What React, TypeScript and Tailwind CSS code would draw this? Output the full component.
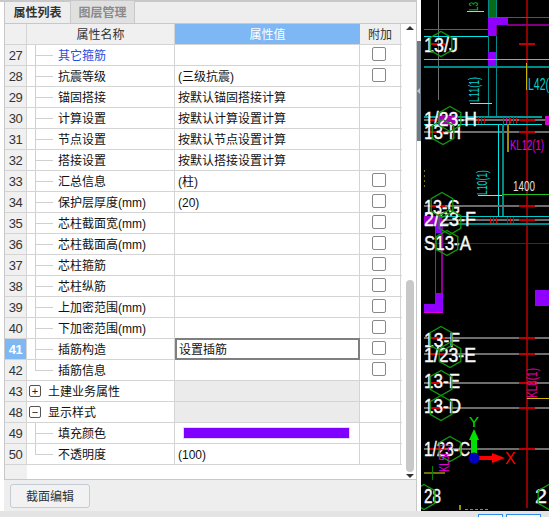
const FONT = 'font-["Liberation_Sans","Noto_Sans_CJK_SC",sans-serif]';

type Row = {
  no: number;
  name: string;
  value?: string;
  check?: boolean;
  link?: boolean;
  group?: '+' | '-';
  last?: boolean;
  active?: boolean;
  color?: boolean;
};

const rows: Row[] = [
  { no: 27, name: '其它箍筋', check: true, link: true },
  { no: 28, name: '抗震等级', value: '(三级抗震)', check: true },
  { no: 29, name: '锚固搭接', value: '按默认锚固搭接计算' },
  { no: 30, name: '计算设置', value: '按默认计算设置计算' },
  { no: 31, name: '节点设置', value: '按默认节点设置计算' },
  { no: 32, name: '搭接设置', value: '按默认搭接设置计算' },
  { no: 33, name: '汇总信息', value: '(柱)', check: true },
  { no: 34, name: '保护层厚度(mm)', value: '(20)', check: true },
  { no: 35, name: '芯柱截面宽(mm)', check: true },
  { no: 36, name: '芯柱截面高(mm)', check: true },
  { no: 37, name: '芯柱箍筋', check: true },
  { no: 38, name: '芯柱纵筋', check: true },
  { no: 39, name: '上加密范围(mm)', check: true },
  { no: 40, name: '下加密范围(mm)', check: true },
  { no: 41, name: '插筋构造', value: '设置插筋', check: true, active: true },
  { no: 42, name: '插筋信息', check: true, last: true },
  { no: 43, name: '土建业务属性', group: '+' },
  { no: 48, name: '显示样式', group: '-' },
  { no: 49, name: '填充颜色', color: true },
  { no: 50, name: '不透明度', value: '(100)', last: true },
];

function PropRow({ row }: { row: Row }) {
  return (
    <div className="flex h-[21px] border-b border-[#d4d4d4]">
      <div
        className={`flex w-[22px] shrink-0 items-center justify-center border-r border-[#d4d4d4] pt-[2px] text-[13px] tracking-[-0.5px] ${
          row.active ? 'bg-[#7db8f5] font-bold text-white' : 'bg-[#f0f0f0] text-[#333]'
        }`}
      >
        {row.no}
      </div>
      <div className="relative flex w-[148px] shrink-0 items-center border-r border-[#d4d4d4]">
        {row.group ? (
          <>
            <span className="ml-[2px] flex h-[12px] w-[12px] items-center justify-center rounded-[2px] border border-[#555] text-[11px] leading-none text-[#222]">
              {row.group === '+' ? '+' : '−'}
            </span>
            <span className="ml-[7px] pt-[2px] text-[#111]">{row.name}</span>
          </>
        ) : (
          <>
            <span className={`ml-[8px] w-px shrink-0 self-start bg-[#d0d0d0] ${row.last ? 'h-[11px]' : 'h-full'}`} />
            <span className="absolute top-[10px] left-[9px] h-px w-[17px] bg-[#d0d0d0]" />
            <span className={`ml-[22px] pt-[2px] ${row.link ? 'text-[#1f4fe0]' : 'text-[#111]'}`}>{row.name}</span>
          </>
        )}
      </div>
      <div
        className={`flex w-[185px] shrink-0 items-center ${row.group ? 'bg-[#ebebeb]' : ''} ${
          row.active ? 'relative -my-px border-2 border-[#7f7f7f] pl-[2px]' : 'border-r border-[#d4d4d4] pl-[3px]'
        }`}
      >
        {row.color ? (
          <div className="ml-[5px] h-[12px] w-[167px] border border-[#e0d8f0] bg-[#8000ff]" />
        ) : (
          <span className="pt-[2px] text-[#111]">{row.value}</span>
        )}
      </div>
      <div className="flex w-[41px] shrink-0 items-center justify-center border-r border-[#d4d4d4]">
        {row.check && <span className="mr-[2px] mb-[2px] h-[14px] w-[14px] rounded-[2px] border border-[#888] bg-white" />}
      </div>
    </div>
  );
}

function Hex({ cx, cy }: { cx: number; cy: number }) {
  const r = 12.5;
  const pts = [0, 60, 120, 180, 240, 300]
    .map((a) => {
      const t = (a * Math.PI) / 180;
      return `${cx + r * Math.sin(t)},${cy - r * Math.cos(t)}`;
    })
    .join(' ');
  return <polygon points={pts} fill="none" stroke="#109a10" strokeWidth="1.3" shapeRendering="auto" />;
}

function Label({ x, y, w, t }: { x: number; y: number; w: number; t: string }) {
  return (
    <text
      x={x}
      y={y}
      fill="#f8f8f8"
      stroke="#f8f8f8"
      strokeWidth="0.4"
      fontSize="21"
      textLength={w}
      lengthAdjust="spacingAndGlyphs"
      fontFamily="Liberation Sans, sans-serif"
      shapeRendering="auto"
    >
      {t}
    </text>
  );
}

function Tick({ y }: { y: number }) {
  return (
    <>
      <line x1="424" x2="549" y1={y} y2={y} stroke="#6e6e6e" strokeWidth="1.5" />
      <line x1="430" x2="445" y1={y} y2={y} stroke="#d00000" strokeWidth="1.5" />
      <line x1="519" x2="535" y1={y} y2={y} stroke="#c00000" strokeWidth="1.5" />
    </>
  );
}

function Hatch({ x, y, color }: { x: number; y: number; color: string }) {
  return (
    <>
      {[0, 3, 6].map((d) => (
        <line key={d} x1={x + d} x2={x + d} y1={y - 3} y2={y + 4} stroke={color} />
      ))}
    </>
  );
}

function CadText({ transform, x, y, fill, size, w, t }: { transform?: string; x?: number; y?: number; fill: string; size: number; w: number; t: string }) {
  return (
    <text
      transform={transform}
      x={x}
      y={y}
      fill={fill}
      fontSize={size}
      textLength={w}
      lengthAdjust="spacingAndGlyphs"
      fontFamily="Liberation Sans, sans-serif"
    >
      {t}
    </text>
  );
}

function CadDrawing() {
  return (
    <svg viewBox="421 0 128 511" className="block h-[511px] w-[128px]" shapeRendering="crispEdges">
      <rect x="421" y="0" width="128" height="511" fill="#000" />
      {/* axis lines */}
      <line x1="438" x2="438" y1="0" y2="100" stroke="#6e6e6e" />
      <line x1="424" x2="424" y1="170" y2="190" stroke="#707000" strokeDasharray="2 3" />
      <line x1="527" x2="527" y1="0" y2="508" stroke="#8b0000" strokeWidth="1.5" />
      <line x1="488" x2="488" y1="0" y2="117" stroke="#008b8b" />
      <line x1="496" x2="496" y1="0" y2="117" stroke="#008b8b" />
      <rect x="489" y="0" width="7" height="17" fill="#0a6a1a" />
      <line x1="488" x2="549" y1="17.5" y2="17.5" stroke="#d000d0" />
      <line x1="507" x2="549" y1="25" y2="25" stroke="#800080" strokeWidth="2" />
      <line x1="496" x2="496" y1="25" y2="36" stroke="#800080" />
      <rect x="488" y="18" width="20" height="7" fill="#8f00ff" />
      <rect x="488" y="18" width="8" height="18" fill="#8f00ff" />
      <rect x="488" y="52" width="8" height="15" fill="#8f00ff" />
      <line x1="424" x2="488" y1="29" y2="29" stroke="#008b8b" />
      <line x1="424" x2="488" y1="36.5" y2="36.5" stroke="#00e5e5" />
      <line x1="424" x2="549" y1="59.5" y2="59.5" stroke="#00e5e5" />
      <line x1="424" x2="549" y1="67" y2="67" stroke="#008b8b" strokeWidth="1.5" />
      <line x1="430" x2="445" y1="44" y2="44" stroke="#d00000" strokeWidth="1.5" />
      <line x1="519" x2="535" y1="44" y2="44" stroke="#c00000" strokeWidth="1.5" />
      <line x1="526" x2="526" y1="63" y2="90" stroke="#c8b400" />
      <line x1="470" x2="492" y1="103.5" y2="103.5" stroke="#e0e000" />
      <line x1="467" x2="484" y1="11.5" y2="11.5" stroke="#e0e000" />
      <line x1="424" x2="542" y1="117" y2="117" stroke="#009a9a" strokeWidth="1.5" />
      <line x1="424" x2="542" y1="124" y2="124" stroke="#00e5e5" />
      <Tick y={120} />
      <Tick y={132} />
      <Hatch x={478} y={120} color="#c00000" />
      <Hatch x={503} y={120} color="#d000a0" />
      <Hatch x={510} y={120} color="#c00000" />
      <rect x="545" y="116" width="4" height="9" fill="#d000d0" />
      <rect x="438" y="115" width="20" height="10" fill="#a000b0" />
      <line x1="498" x2="498" y1="124" y2="216" stroke="#00e5e5" />
      <line x1="503" x2="503" y1="124" y2="216" stroke="#008b8b" strokeWidth="1.5" />
      <line x1="508" x2="508" y1="124" y2="152" stroke="#a08a00" strokeWidth="2" />
      <line x1="478" x2="502" y1="195.5" y2="195.5" stroke="#e0e000" />
      <line x1="502" x2="549" y1="194" y2="194" stroke="#20c020" />
      <Tick y={206} />
      <Tick y={220} />
      <Hatch x={490} y={220} color="#c00000" />
      <Hatch x={507} y={220} color="#c00000" />
      <line x1="424" x2="549" y1="216" y2="216" stroke="#00c8c8" />
      <line x1="424" x2="549" y1="224" y2="224" stroke="#008b8b" strokeWidth="1.5" />
      <line x1="424" x2="549" y1="243" y2="243" stroke="#a00000" />
      <rect x="424" y="216" width="18" height="9" fill="#a000d0" />
      <rect x="435" y="225" width="8" height="8" fill="#8f00ff" />
      <line x1="435" x2="435" y1="225" y2="295" stroke="#c000d0" />
      <line x1="442" x2="442" y1="225" y2="312" stroke="#900090" strokeWidth="2" />
      <rect x="435" y="293" width="8" height="12" fill="#8f00ff" />
      <rect x="424" y="304" width="19" height="8" fill="#8f00ff" />
      <line x1="424" x2="443" y1="312" y2="312" stroke="#e000e0" />
      <rect x="535" y="290" width="14" height="16" fill="#8f00ff" />
      <Tick y={338} />
      <Tick y={354} />
      <Tick y={383} />
      <Tick y={408} />
      <Tick y={449} />
      <line x1="527" x2="549" y1="398" y2="398" stroke="#c8b400" />
      <line x1="424" x2="445" y1="473" y2="473" stroke="#707000" strokeWidth="2" />
      <line x1="432" x2="432" y1="466" y2="480" stroke="#0a7a0a" />
      <line x1="460" x2="460" y1="505" y2="510" stroke="#a08a00" strokeWidth="2" />
      <line x1="465" x2="488" y1="509" y2="509" stroke="#00c8c8" strokeDasharray="3 2" />
      <Label x={424} y={52} w={34} t="13/J" />
      <Label x={424} y={126} w={53} t="1/23-H" />
      <Label x={424} y={139} w={37} t="13-H" />
      <Label x={424} y={214} w={36} t="13-G" />
      <Label x={424} y={226} w={52} t="2/23-F" />
      <Label x={424} y={250} w={47} t="S13-A" />
      <Label x={424} y={347} w={36} t="13-F" />
      <Label x={424} y={362} w={52} t="1/23-E" />
      <Label x={424} y={388} w={36} t="13-E" />
      <Label x={424} y={413} w={37} t="13-D" />
      <Label x={424} y={456} w={46} t="1/23-C" />
      <Label x={424} y={503} w={17} t="28" />
      <Label x={535} y={503} w={12} t="2" />
      <Hex cx={441} cy={44} />
      <Hex cx={450} cy={119} />
      <Hex cx={443} cy={132} />
      <Hex cx={442} cy={205} />
      <Hex cx={450} cy={222} />
      <Hex cx={447} cy={243} />
      <Hex cx={441} cy={339} />
      <Hex cx={450} cy={355} />
      <Hex cx={441} cy={383} />
      <Hex cx={441} cy={408} />
      <Hex cx={450} cy={449} />
      <Hex cx={424} cy={497} />
      <Hex cx={549} cy={497} />
      <CadText x={513} y={191} fill="#e0e0e0" size={14} w={22} t="1400" />
      <CadText x={528} y={90} fill="#00d0d0" size={16} w={21} t="L42(" />
      <CadText x={510} y={150} fill="#e000e0" size={15} w={34} t="KL12(1)" />
      <CadText transform="translate(479 102) rotate(-90)" fill="#00d0d0" size={14} w={25} t="L11(1)" />
      <CadText transform="translate(487 195) rotate(-90)" fill="#00d0d0" size={14} w={25} t="L10(1)" />
      <CadText transform="translate(537 398) rotate(-90)" fill="#e000a0" size={14} w={30} t="KL8(1)" />
      <CadText transform="translate(449 472) rotate(-90)" fill="#e000e0" size={14} w={28} t="KL5(1)" />
      <CadText transform="translate(478 11) rotate(-90)" fill="#00c020" size={13} w={9} t="L3" />
      {/* axis gizmo */}
      <g shapeRendering="auto">
        <rect x="471" y="438" width="6" height="20" fill="#00e000" />
        <polygon points="474,429 479,440 469,440" fill="#00e000" />
        <rect x="479" y="456" width="15" height="4" fill="#ff0000" />
        <polygon points="505,458 492,453 492,463" fill="#ff0000" />
        <circle cx="474" cy="458" r="5.5" fill="#0000c0" />
        <text x="469" y="427" fill="#00e000" fontSize="15" fontFamily="Liberation Sans, sans-serif">
          Y
        </text>
        <text x="505" y="464" fill="#ff0000" fontSize="16" fontFamily="Liberation Sans, sans-serif">
          X
        </text>
      </g>
    </svg>
  );
}

export default function App() {
  return (
    <div className={`${FONT} flex h-[517px] w-[549px] flex-col overflow-hidden bg-white text-[12px]`}>
      <div className="flex h-[511px]">
        <div className="flex w-[417px] shrink-0 flex-col border-t-2 border-r border-[#c8c8c8] pl-[4px]">
          {/* tabs */}
          <div className="flex h-[22px] shrink-0 items-end border-b border-l border-[#c8c8c8] bg-[#eeeeee]">
            <div className="flex h-[22px] w-[65px] items-center justify-center pt-[2px] font-bold text-[#333]">属性列表</div>
            <div className="flex h-[22px] w-[65px] items-center justify-center border-x border-[#c8c8c8] bg-[#e0e0e0] pt-[2px] font-bold text-[#8a8a8a]">
              图层管理
            </div>
          </div>
          {/* grid */}
          <div className="flex h-[456px] shrink-0 border-b border-l border-[#c8c8c8]">
            <div className="flex w-[397px] shrink-0 flex-col">
              <div className="flex h-[21px] shrink-0 border-b border-[#d4d4d4]">
                <div className="w-[22px] shrink-0 border-r border-[#d4d4d4] bg-[#f0f0f0]" />
                <div className="flex w-[148px] shrink-0 items-center justify-center border-r border-[#d4d4d4] bg-[#f0f0f0] pt-[2px] text-[#333]">
                  属性名称
                </div>
                <div className="flex w-[185px] shrink-0 items-center justify-center bg-[#7db8f5] pt-[2px] text-white">属性值</div>
                <div className="flex w-[41px] shrink-0 items-center justify-center border-r border-[#d4d4d4] bg-[#f0f0f0] pt-[2px] text-[#333]">
                  附加
                </div>
              </div>
              {rows.map((row) => (
                <PropRow key={row.no} row={row} />
              ))}
              <div className="flex-1">
                <div className="h-full w-[22px] bg-[#f0f0f0]" />
              </div>
            </div>
            {/* scrollbar */}
            <div className="flex w-[15px] shrink-0 flex-col items-center pt-[2px]">
              <span className="h-0 w-0 border-x-[4px] border-b-[4px] border-x-transparent border-b-[#333]" />
              <div className="mt-[250px] h-[192px] w-[8px] rounded-[4px] bg-[#c8c8c8]" />
              <span className="mt-[2px] h-0 w-0 border-x-[4px] border-t-[4px] border-x-transparent border-t-[#333]" />
            </div>
          </div>
          {/* footer */}
          <div className="flex flex-1 items-center bg-[#eeeeee] pl-[6px]">
            <button className="flex h-[24px] w-[80px] items-center justify-center rounded-[3px] border border-[#c4ccd8] bg-[#f2f2f2] pt-[2px] text-[#333]">
              截面编辑
            </button>
          </div>
        </div>
        {/* splitter */}
        <div className="flex w-[4px] shrink-0 flex-col bg-white pt-[41px]">
          <div className="flex h-[100px] items-center bg-[#6e7b88]">
            <span className="h-0 w-0 border-y-[3px] border-r-[3px] border-y-transparent border-r-[#c8c8c8]" />
          </div>
        </div>
        <CadDrawing />
      </div>
      {/* status strip */}
      <div className="flex h-[6px] justify-end gap-[3px] bg-[#e4e4e4] pt-[3px] pr-[8px]">
        <div className="h-[3px] w-[25px] border-x border-t border-[#2f8fe8] bg-white" />
        <div className="h-[3px] w-[35px] border-x border-t border-[#2f8fe8] bg-white" />
      </div>
    </div>
  );
}
